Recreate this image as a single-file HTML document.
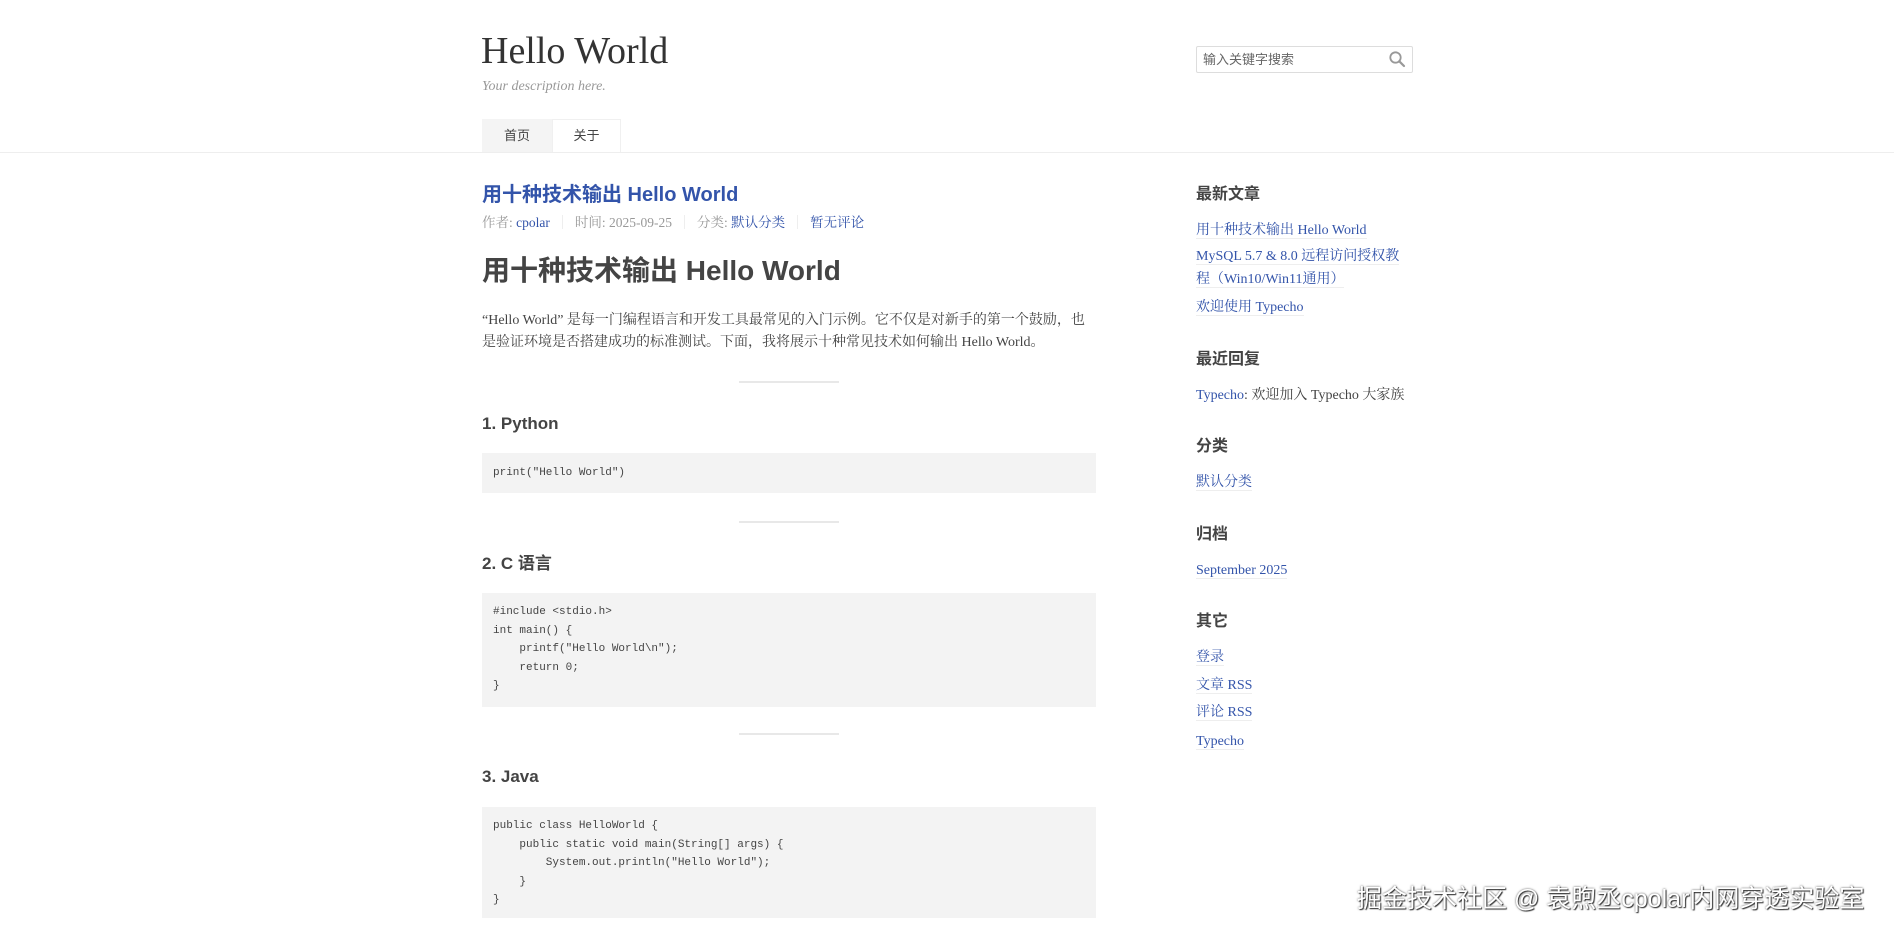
<!DOCTYPE html>
<html><head><meta charset="utf-8"><style>
*{margin:0;padding:0;box-sizing:border-box}
body{width:1894px;height:938px;overflow:hidden;background:#fff;position:relative;font-family:"Liberation Serif","Noto Serif CJK SC","Noto Sans CJK SC",serif;color:#444}
.a{position:absolute;white-space:nowrap}
.sans{font-family:"Liberation Sans","Noto Sans CJK SC",sans-serif}
.mono{font-family:"Liberation Mono","DejaVu Sans Mono",monospace}
a{color:#3354aa;text-decoration:none}
.code{position:absolute;left:482px;width:614px;background:#f3f3f3;font-size:11px;color:#444;padding-left:11px}
.code div{height:18.6px;line-height:18.6px;white-space:pre}
.hr{position:absolute;left:739px;width:100px;height:2px;background:#e8e8e8}
.h2{position:absolute;left:482px;font-size:17px;font-weight:bold;color:#444;line-height:24px;height:24px}
.sh{position:absolute;left:1196px;font-size:16px;font-weight:bold;color:#444;line-height:22px;height:22px;font-family:"Liberation Sans","Noto Sans CJK SC",sans-serif}
.sl{position:absolute;left:1196px;font-size:14px;line-height:20px;height:20px;white-space:nowrap}
.sl a{border-bottom:1px solid #eee}
</style></head><body>
<div class="a" style="left:481px;top:29px;font-size:38px;line-height:44px;color:#333">Hello World</div>
<div class="a" style="left:482px;top:78px;font-size:14px;line-height:18px;color:#999;font-style:italic">Your description here.</div>
<div class="a" style="left:1196px;top:46px;width:217px;height:27px;border:1px solid #ddd;border-radius:2px"></div>
<div class="a sans" style="left:1203px;top:50px;font-size:13px;line-height:19px;color:#666">输入关键字搜索</div>
<svg class="a" style="left:1388px;top:50px" width="18" height="18" viewBox="0 0 18 18"><circle cx="7.5" cy="7.5" r="5.2" fill="none" stroke="#999" stroke-width="1.8"/><path d="M11.3 11.3L16 16" stroke="#999" stroke-width="2.2" stroke-linecap="round"/></svg>
<div class="a" style="left:482px;top:119px;width:70px;height:33px;background:#f4f4f4"></div>
<div class="a" style="left:552px;top:119px;width:69px;height:33px;border:1px solid #f0f0f0;border-bottom:none"></div>
<div class="a sans" style="left:482px;top:119px;width:70px;text-align:center;line-height:33px;font-size:13px;color:#444">首页</div>
<div class="a sans" style="left:552px;top:119px;width:69px;text-align:center;line-height:33px;font-size:13px;color:#444">关于</div>
<div class="a" style="left:0;top:152px;width:1894px;height:1px;background:#eee"></div>

<div class="a sans" style="left:482px;top:182px;font-size:20px;font-weight:bold;line-height:26px;color:#3354aa">用十种技术输出 Hello World</div>
<div class="a" style="left:482px;top:214px;font-size:13.5px;line-height:18px;color:#999">作者: <a href="#">cpolar</a><span style="display:inline-block;width:1px;height:14px;background:#eee;margin:0 12px;vertical-align:-2px"></span>时间: 2025-09-25<span style="display:inline-block;width:1px;height:14px;background:#eee;margin:0 12px;vertical-align:-2px"></span>分类: <a href="#">默认分类</a><span style="display:inline-block;width:1px;height:14px;background:#eee;margin:0 12px;vertical-align:-2px"></span><a href="#">暂无评论</a></div>
<div class="a sans" style="left:482px;top:253px;font-size:28px;font-weight:bold;line-height:36px;color:#444">用十种技术输出 Hello World</div>
<div class="a" style="left:482px;top:310px;font-size:14px;line-height:22px;color:#444">“Hello World” 是每一门编程语言和开发工具最常见的入门示例。它不仅是对新手的第一个鼓励，也</div>
<div class="a" style="left:482px;top:332px;font-size:14px;line-height:22px;color:#444">是验证环境是否搭建成功的标准测试。下面，我将展示十种常见技术如何输出 Hello World。</div>

<div class="hr" style="top:381px"></div>
<div class="h2 sans" style="top:412px">1. Python</div>
<div class="code mono" style="top:453px;height:40px;padding-top:11px"><div>print("Hello World")</div></div>
<div class="hr" style="top:521px"></div>
<div class="h2 sans" style="top:552px">2. C 语言</div>
<div class="code mono" style="top:593px;height:114px;padding-top:10px"><div>#include &lt;stdio.h&gt;</div><div>int main() {</div><div>    printf("Hello World\n");</div><div>    return 0;</div><div>}</div></div>
<div class="hr" style="top:733px"></div>
<div class="h2 sans" style="top:765px">3. Java</div>
<div class="code mono" style="top:807px;height:111px;padding-top:10px"><div>public class HelloWorld {</div><div>    public static void main(String[] args) {</div><div>        System.out.println("Hello World");</div><div>    }</div><div>}</div></div>

<div class="sh" style="top:184px">最新文章</div>
<div class="sl" style="top:221px"><a href="#">用十种技术输出 Hello World</a></div>
<div class="sl" style="top:247px"><a href="#">MySQL 5.7 &amp; 8.0 远程访问授权教</a></div>
<div class="sl" style="top:270px"><a href="#">程（Win10/Win11通用）</a></div>
<div class="sl" style="top:298px"><a href="#">欢迎使用 Typecho</a></div>
<div class="sh" style="top:349px">最近回复</div>
<div class="sl" style="top:386px;color:#444"><a href="#" style="border:none">Typecho</a>: 欢迎加入 Typecho 大家族</div>
<div class="sh" style="top:436px">分类</div>
<div class="sl" style="top:473px"><a href="#">默认分类</a></div>
<div class="sh" style="top:524px">归档</div>
<div class="sl" style="top:561px"><a href="#">September 2025</a></div>
<div class="sh" style="top:611px">其它</div>
<div class="sl" style="top:648px"><a href="#">登录</a></div>
<div class="sl" style="top:676px"><a href="#">文章 RSS</a></div>
<div class="sl" style="top:703px"><a href="#">评论 RSS</a></div>
<div class="sl" style="top:732px"><a href="#">Typecho</a></div>

<div class="a sans" style="left:1357px;top:884px;font-size:25px;line-height:30px;color:#fff;text-shadow:1px 1px 1px #333,0 0 2px #555">掘金技术社区 @ 袁煦丞cpolar内网穿透实验室</div>
</body></html>
